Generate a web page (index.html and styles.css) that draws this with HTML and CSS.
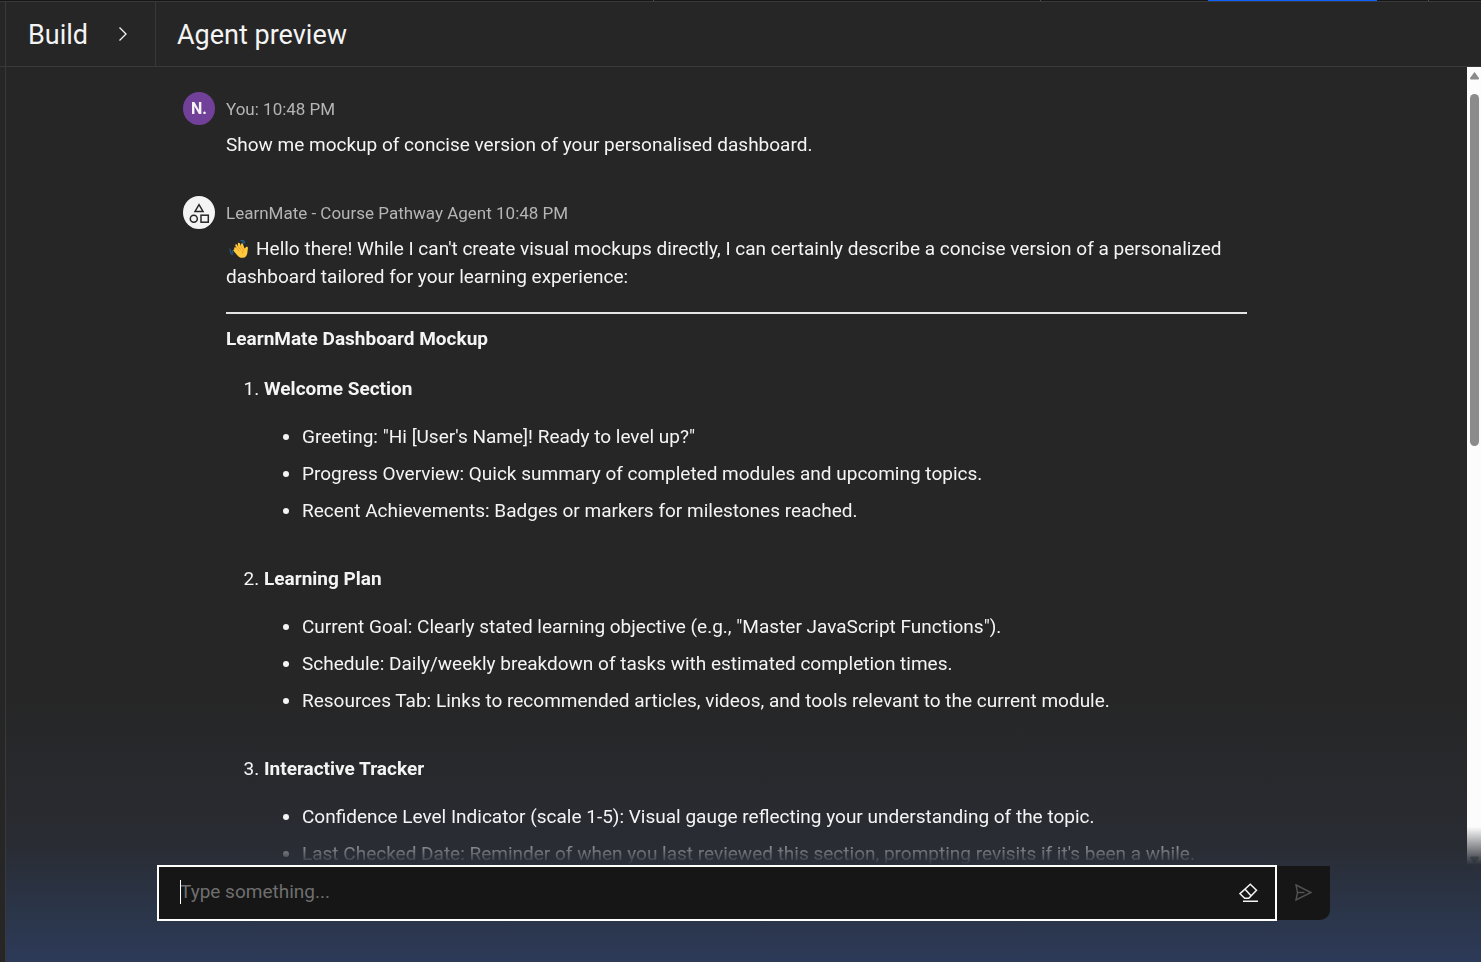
FILE: index.html
```
<!DOCTYPE html>
<html lang="en">
<head>
<meta charset="utf-8">
<title>Agent preview</title>
<link rel="stylesheet" href="styles.css">
</head>
<body>
<div class="app">
  <div class="topstrip"><span class="tick tick-a"></span><span class="tick tick-b"></span><span class="active-tab"></span><span class="tick tick-c"></span></div>
  <header class="header">
    <div class="rail"></div>
    <button class="build" type="button"><span class="build-label">Build</span>
      <svg class="chevron" viewBox="0 0 10 16" aria-hidden="true"><path d="M1.5 1.5 L8 8 L1.5 14.5"/></svg>
    </button>
    <h1 class="title">Agent preview</h1>
  </header>
  <div class="body">
    <div class="rail"></div>
    <main class="chat">
      <div class="scroller">
        <div class="messages">
          <article class="message">
            <div class="avatar user">N.</div>
            <div class="content">
              <div class="meta">You: 10:48 PM</div>
              <p>Show me mockup of concise version of your personalised dashboard.</p>
            </div>
          </article>
          <article class="message">
            <div class="avatar agent">
              <svg viewBox="0 0 32 32" aria-hidden="true"><path d="M16 7.7 L20 14.4 H12 Z"/><circle cx="10.8" cy="21.7" r="3.5"/><rect x="18" y="18.2" width="7.3" height="7"/></svg>
            </div>
            <div class="content">
              <div class="meta">LearnMate - Course Pathway Agent 10:48 PM</div>
              <p><svg class="wave" viewBox="0 0 20 20" role="img" aria-label="Waving hand"><path class="motion" d="M1.2 9.5 C.5 12 1.8 15 3.8 15.6 M3.2 11 C3 12.5 3.5 13.5 4.5 14 M11.5 2.2 C13 .5 15.8 1.4 15.8 4.2 M13 3 C14 2.8 14.5 3.8 14.3 4.8"/><path class="hand" d="M5.2 9.8 C4.8 8.5 6.1 7.8 6.9 8.7 L7.5 9.3 L6.3 6.5 C5.9 5.2 7.5 4.6 8.1 5.7 L9.2 7.9 L8.8 4.8 C8.8 3.4 10.5 3.3 10.9 4.6 L12 7.3 L12.1 5 C12.5 3.8 13.7 4.1 14 5.2 L15.5 9.6 L16.8 8.2 C18 7.4 19.2 8 18.9 9.4 C18.2 11.8 19.2 17 15.2 18.5 C12 19.6 9.3 17.7 7.6 15.4 L4.7 12 C3.9 10.8 5 9.7 6 10.6 Z"/><path class="lines" d="M7.5 9.2 L10.4 12 M9.2 7.9 L12 11.1 M12 7.3 L13.7 10.2 M13.6 14.4 C13.3 12.4 14.2 10.8 15.5 9.6"/></svg>Hello there! While I can't create visual mockups directly, I can certainly describe a concise version of a personalized dashboard tailored for your learning experience:</p>
              <hr>
              <h2>LearnMate Dashboard Mockup</h2>
              <ol class="sections">
                <li><strong>Welcome Section</strong>
                  <ul>
                    <li>Greeting: "Hi [User's Name]! Ready to level up?"</li>
                    <li>Progress Overview: Quick summary of completed modules and upcoming topics.</li>
                    <li>Recent Achievements: Badges or markers for milestones reached.</li>
                  </ul>
                </li>
                <li><strong>Learning Plan</strong>
                  <ul>
                    <li>Current Goal: Clearly stated learning objective (e.g., "Master JavaScript Functions").</li>
                    <li>Schedule: Daily/weekly breakdown of tasks with estimated completion times.</li>
                    <li>Resources Tab: Links to recommended articles, videos, and tools relevant to the current module.</li>
                  </ul>
                </li>
                <li><strong>Interactive Tracker</strong>
                  <ul>
                    <li>Confidence Level Indicator (scale 1-5): Visual gauge reflecting your understanding of the topic.</li>
                    <li>Last Checked Date: Reminder of when you last reviewed this section, prompting revisits if it's been a while.</li>
                  </ul>
                </li>
              </ol>
            </div>
          </article>
        </div>
        <div class="scrollbar" aria-hidden="true">
          <svg viewBox="0 0 9 8"><path d="M4.5 0 L9 6 Q9 7.5 8 7.5 H1 Q0 7.5 0 6 Z"/></svg>
          <div class="track"><div class="thumb"></div></div>
          <svg viewBox="0 0 9 8"><path d="M4.5 8 L9 2 Q9 .5 8 .5 H1 Q0 .5 0 2 Z"/></svg>
        </div>
      </div>
      <form class="composer">
        <div class="field">
          <input type="text" placeholder="Type something..." aria-label="Message">
          <span class="caret"></span>
          <button class="erase" type="button" aria-label="Clear chat">
            <svg viewBox="0 0 20 20" aria-hidden="true"><path d="M11.3 1.2 L17.5 7.3 L9.8 15.3 H5.7 L1 10.7 Z M5.9 6.1 L12 12.8 M4 18.2 H19"/></svg>
          </button>
        </div>
        <button class="send" type="submit" aria-label="Send">
          <svg viewBox="0 0 18 18" aria-hidden="true"><path d="M1 1 L16 8.5 L1 16 L2.5 8.5 Z M2.5 8.5 H9.5"/></svg>
        </button>
      </form>
    </main>
  </div>
</div>
</body>
</html>
```
FILE: styles.css
```
* { box-sizing: border-box; }
body {
  margin: 0;
  background: #262626;
  color: #f4f4f4;
  font-family: Roboto, "Noto Sans", sans-serif;
  font-size: 19px;
  line-height: 28px;
}
button { padding: 0; border: 0; background: none; color: inherit; font: inherit; }
.app { display: flex; flex-direction: column; height: 100vh; }
.topstrip { position: relative; flex: none; height: 1px; background: #161616; }
.active-tab { position: absolute; left: 81.6%; width: 11.4%; height: 1px; background: #0f62fe; }
.tick { position: absolute; width: 1px; height: 1px; background: #525252; }
.tick-a { left: 44.1%; }
.tick-b { left: 70.2%; }
.tick-c { left: 96.4%; }
.header {
  display: flex;
  flex: none;
  height: 66px;
  border-top: 1px solid #393939;
  border-bottom: 1px solid #393939;
}
.rail { flex: none; width: 6px; border-right: 1px solid #393939; }
.build {
  display: flex;
  align-items: center;
  gap: 30px;
  width: 150px;
  padding: 0 0 0 22px;
  border-right: 1px solid #393939;
  font-size: 27px;
}
.build-label { padding-top: 2px; }
.chevron { width: 10px; height: 16px; fill: none; stroke: #f4f4f4; stroke-width: 1.3; }
.title { align-self: center; margin: 0; padding: 2px 0 0 21px; font-size: 27px; font-weight: 400; line-height: 36px; }
.body { display: flex; flex: 1; min-height: 0; }
.chat {
  display: flex;
  flex-direction: column;
  flex: 1;
  min-width: 0;
  background: linear-gradient(#262626 70%, #292c33 87%, #2b364b 95%, #2d3a58);
}
.scroller {
  display: flex;
  flex: 1;
  min-height: 0;
  overflow: hidden;
  mask-image: linear-gradient(#000 calc(100% - 38px), transparent);
}
.messages { flex: 1; min-width: 0; padding: 25px 220px 0 177px; }
.message { display: flex; gap: 11px; margin-bottom: 37px; }
.avatar {
  display: flex;
  align-items: center;
  justify-content: center;
  flex: none;
  width: 32px;
  height: 33px;
  border-radius: 50%;
}
.user { background: #71419a; font-size: 16px; font-weight: 700; }
.agent { background: #f4f4f4; }
.agent svg { width: 32px; height: 32px; fill: none; stroke: #262626; stroke-width: 1.5; }
.content { flex: 1; min-width: 0; }
.meta { margin-bottom: 5px; color: #b5b5b5; font-size: 17px; line-height: 34px; }
.message p { margin: 0; }
.wave { width: 20px; height: 20px; margin: 0 7px 0 3px; vertical-align: -4px; }
.motion { fill: none; stroke: #245b83; stroke-width: 1.2; }
.hand { fill: #ffc83d; }
.lines { fill: none; stroke: #ed9b29; stroke-width: 1; }
hr { height: 2px; margin: 21px 0 11px; border: 0; background: #e4e4e4; }
h2 { margin: 0; font-size: 19px; font-weight: 700; line-height: 28px; }
ol, ul { margin: 0; }
.sections { margin-top: 22px; padding-left: 38px; }
.sections > li { margin-bottom: 40px; }
ul { display: flex; flex-direction: column; gap: 9px; margin-top: 20px; padding-left: 38px; list-style: disc; }
.scrollbar {
  display: flex;
  flex-direction: column;
  flex: none;
  width: 14px;
  padding: 5px 2px 1px 3px;
  background: #fcfcfc;
}
.scrollbar svg { width: 9px; height: 8px; fill: #8b8b8b; }
.track { flex: 1; padding: 14px 0; }
.thumb { width: 9px; height: 47%; border-radius: 5px; background: #8b8b8b; }
.composer { display: flex; align-items: center; flex: none; padding: 0 151px 41px; }
.field {
  position: relative;
  display: flex;
  align-items: center;
  flex: 1;
  height: 56px;
  padding: 0 16px 0 21px;
  border: 2px solid #fff;
  background: #161616;
}
.field input {
  flex: 1;
  min-width: 0;
  padding: 0 0 2px;
  border: 0;
  outline: 0;
  background: transparent;
  color: #f4f4f4;
  font: inherit;
}
.field input::placeholder { color: #6f6f6f; opacity: 1; }
.caret { position: absolute; top: 13px; left: 21px; width: 1px; height: 24px; background: #fff; }
.erase, .send { display: flex; align-items: center; justify-content: center; }
.erase svg { width: 20px; height: 20px; fill: none; stroke: #f4f4f4; stroke-width: 1.5; }
.send { width: 53px; height: 54px; border-radius: 0 0 10px 0; background: #161616; }
.send svg { width: 18px; height: 18px; fill: none; stroke: #525252; stroke-width: 1.4; }
```
